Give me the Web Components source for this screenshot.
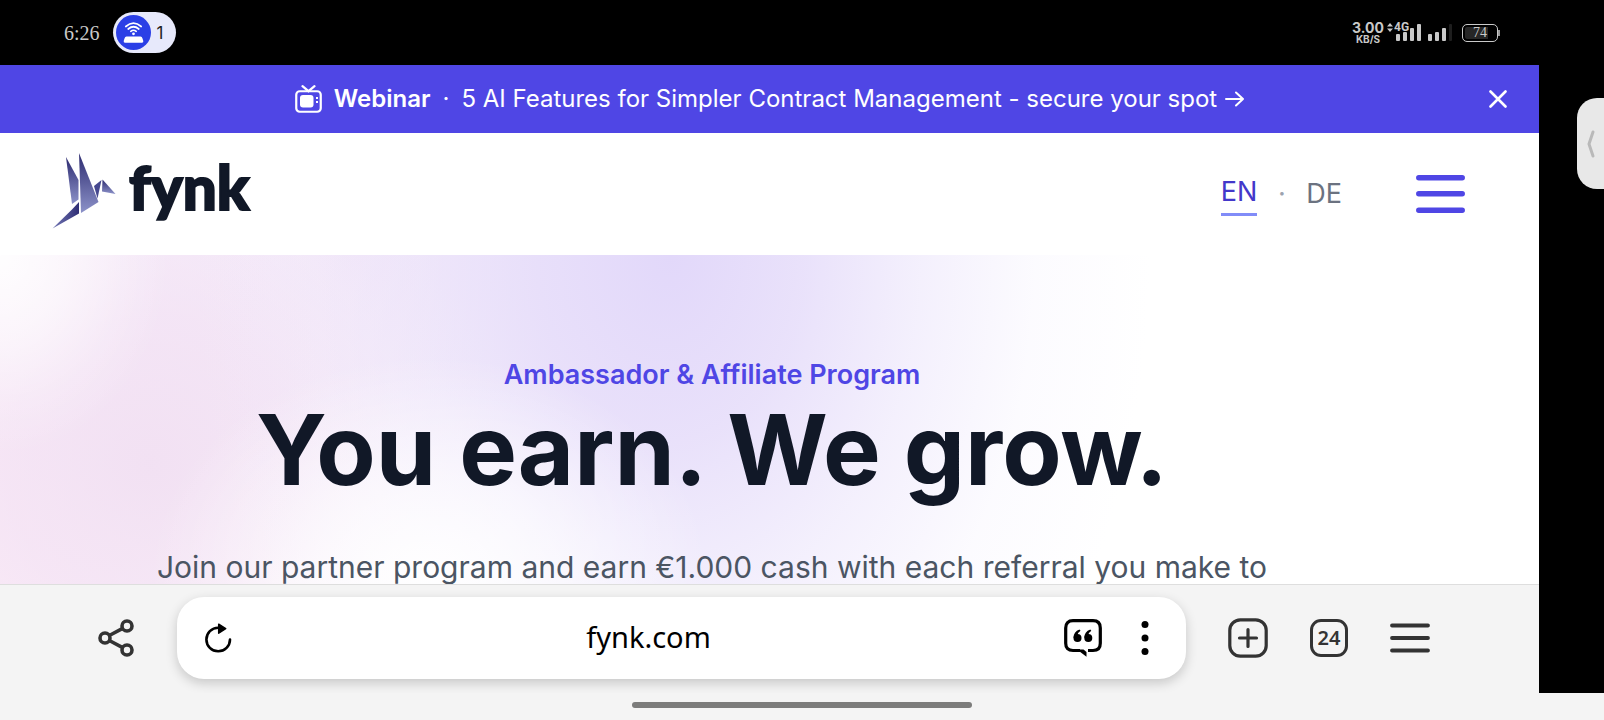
<!DOCTYPE html>
<html lang="en">
<head>
<meta charset="utf-8">
<meta name="viewport" content="width=device-width, initial-scale=1">
<title>fynk – Ambassador &amp; Affiliate Program</title>
<style>
  html, body { margin: 0; height: 100%; }
  body { font-family: Inter, "Liberation Sans", sans-serif; background: #f4f4f4; overflow: hidden; }
</style>
</head>
<body>
<phone-shell>
  <status-bar slot="status"></status-bar>
  <promo-banner>
    <span slot="label">Webinar</span>
    5 AI Features for Simpler Contract Management - secure your spot
  </promo-banner>
  <site-header></site-header>
  <hero-section>
    <span slot="eyebrow">Ambassador &amp; Affiliate Program</span>
    <span slot="title">You earn. We grow.</span>
    Join our partner program and earn €1.000 cash with each referral you make to
  </hero-section>
  <browser-toolbar></browser-toolbar>
  <edge-rail slot="rail"></edge-rail>
</phone-shell>

<script>
const define = (name, html) => {
  const template = document.createElement('template');
  template.innerHTML = html;
  customElements.define(name, class extends HTMLElement {
    constructor() {
      super();
      this.attachShadow({ mode: 'open' }).append(template.content.cloneNode(true));
    }
  });
};

const reset = `
  :host, *, *::before, *::after { box-sizing: border-box; }
  svg { display: block; flex: none; }
  button { display: flex; align-items: center; justify-content: center; padding: 0; border: 0; background: none; color: inherit; font: inherit; cursor: pointer; }
  a { color: inherit; text-decoration: none; }
`;

define('phone-shell', `
  <style>${reset}
    :host { display: flex; flex-direction: column; height: 100vh; }
    .body { display: flex; flex: 1; min-height: 0; }
    .screen { display: flex; flex-direction: column; flex: 1; min-width: 0; background: #fff; }
    .home { display: flex; justify-content: center; align-items: center; height: 27px; padding-bottom: 3px; background: #f4f4f4; }
    .home i { width: 340px; height: 6px; border-radius: 3px; background: #7c7c7b; }
  </style>
  <slot name="status"></slot>
  <div class="body">
    <main class="screen"><slot></slot></main>
    <slot name="rail"></slot>
  </div>
  <div class="home"><i></i></div>
`);

define('status-bar', `
  <style>${reset}
    :host { display: flex; align-items: center; justify-content: space-between; height: 65px; padding: 0 104px 0 64px; background: #000; color: #c9c9c9; }
    .left, .right { display: flex; align-items: center; }
    .left { gap: 13px; }
    .clock { font: 20px/24px "Liberation Serif", serif; }
    .pill { display: flex; align-items: center; gap: 6px; width: 63px; height: 41px; padding: 0 3px; border-radius: 21px; background: #e7e9fb; color: #222; font-size: 17px; line-height: 24px; }
    .right { gap: 7px; }
    .speed { display: flex; flex-direction: column; align-items: center; margin-right: 5px; font: 700 14px/12px Inter, sans-serif; }
    .speed small { font-size: 10px; line-height: 10px; }
    .cell { position: relative; display: flex; }
    .cell b { position: absolute; left: -2px; top: -4px; font: 700 12px/14px Roboto, sans-serif; }
    .cell .arrows { position: absolute; left: -9px; top: -1px; }
    .battery { display: flex; align-items: center; margin-left: 3px; }
    .battery span { display: flex; align-items: center; justify-content: center; width: 36px; height: 18px; border: 1px solid #c9c9c9; border-radius: 5px; box-shadow: inset 0 0 0 2px #000; background: linear-gradient(90deg, #262626 74%, #000 74%); font: 14px/16px "Liberation Serif", serif; }
    .battery::after { content: ""; width: 2px; height: 6px; background: #999; }
  </style>
  <div class="left">
    <span class="clock">6:26</span>
    <div class="pill">
      <svg width="35" height="35" viewBox="0 0 35 35"><circle cx="17.500" cy="17.500" r="17.500" fill="#2b3fe6"/><g fill="none" stroke="#fff" stroke-width="1.700" stroke-linecap="round"><path d="M9.800 11.500Q17.500 4.800 25.200 11.500M12.200 14Q17.500 9.500 22.800 14M14.800 16.300Q17.500 14.200 20.200 16.300"/></g><circle cx="17.500" cy="18.800" r="1.400" fill="#fff"/><path d="M10.500 21.500h14q1.500 0 2 2l.8 2.600q.3 1.700-1.300 1.700H9q-1.600 0-1.300-1.700l.8-2.600q.5-2 2-2z" fill="#fff"/></svg>
      <span>1</span>
    </div>
  </div>
  <div class="right">
    <div class="speed"><span>3.00</span><small>KB/S</small></div>
    <div class="cell">
      <svg class="arrows" width="6" height="9" viewBox="0 0 6 9" fill="#c9c9c9"><path d="M0 3.500L3 0l3 3.500zM0 5.500h6L3 9z"/></svg>
      <b>4G</b>
      <svg width="25" height="17" viewBox="0 0 25 17" fill="#c9c9c9"><rect y="10" width="4" height="7" rx="1"/><rect x="7" y="8" width="4" height="9" rx="1"/><rect x="14" y="4" width="4" height="13" rx="1"/><rect x="21" width="4" height="17" rx="1"/></svg>
    </div>
    <svg width="24" height="17" viewBox="0 0 24 17" fill="#c9c9c9"><rect y="10" width="4" height="7" rx="1"/><rect x="7" y="8" width="4" height="9" rx="1"/><rect x="14" y="4" width="4" height="13" rx="1"/><rect x="21" width="3" height="17" rx="1" fill="#1e1e1e"/></svg>
    <div class="battery"><span>74</span></div>
  </div>
`);

define('promo-banner', `
  <style>${reset}
    :host { display: grid; grid-template-columns: 1fr auto 1fr; align-items: center; flex: none; height: 68px; padding: 0 24px; background: #4f46e5; color: #fff; }
    a { grid-column: 2; display: flex; align-items: center; gap: 12px; font-size: 24px; line-height: 32px; white-space: nowrap; }
    strong { font-weight: 600; }
    .text { display: flex; align-items: center; gap: 8px; }
    button { justify-self: end; width: 34px; height: 34px; }
  </style>
  <a href="#webinar">
    <svg width="27" height="28" viewBox="0 0 27 28" fill="none" stroke="#fff" stroke-width="2.200"><rect x="1.250" y="6.250" width="24.500" height="20.500" rx="3.500"/><path d="M7.500 1.200l6 5 6-5" stroke-linecap="round"/><rect x="5" y="10" width="13.500" height="12.500" rx="3" fill="#fff" stroke="none"/><path d="M22 12v2M22 16v2" stroke-width="2"/></svg>
    <strong><slot name="label"></slot></strong>
    <span>·</span>
    <span class="text"><span><slot></slot></span>
      <svg width="19" height="16" viewBox="0 0 19 16" fill="none" stroke="#fff" stroke-width="2" stroke-linecap="round" stroke-linejoin="round"><path d="M1 8h17M11 1.500L18 8l-7 6.500"/></svg>
    </span>
  </a>
  <button aria-label="Dismiss"><svg width="18" height="18" viewBox="0 0 18 18" stroke="#fff" stroke-width="2.600" stroke-linecap="round"><path d="M1.500 1.500l15 15M16.500 1.500l-15 15"/></svg></button>
`);

define('site-header', `
  <style>${reset}
    :host { display: flex; align-items: center; justify-content: space-between; flex: none; height: 122px; padding: 0 74px 0 52px; background: #fff; }
    .logo { display: flex; align-items: flex-start; gap: 13px; padding-bottom: 6px; color: #111827; font: 900 60px/68px Lato, sans-serif; -webkit-text-stroke: 2px #111827; }
    nav { display: flex; align-items: center; font-size: 27px; line-height: 32px; color: #6b7280; }
    nav a[aria-current] { padding: 4px 0 5px; border-bottom: 3px solid #818cf8; color: #4338ca; }
    nav span { width: 49px; text-align: center; color: #9ca3af; }
    button { margin-left: 74px; color: #4f46e5; }
  </style>
  <a class="logo" href="#home">
    <svg width="64" height="76" viewBox="52 153 64 76" aria-hidden="true">
      <defs>
        <linearGradient id="g" x1="0" y1="0" x2="0" y2="1"><stop stop-color="#2d2b70"/><stop offset="1" stop-color="#8c92c9"/></linearGradient>
        <linearGradient id="h" x1="0" y1="0" x2="1" y2="0"><stop stop-color="#7377b5"/><stop offset="1" stop-color="#2f2e75"/></linearGradient>
      </defs>
      <path d="M66 157L78.500 180v19.500L72 204z" fill="url(#g)"/>
      <path d="M79 153L98.500 202 81 213z" fill="url(#g)"/>
      <path d="M94 186l7.500-6-4 18.500z" fill="#46488f"/>
      <path d="M102.500 179.500L115.500 194 102 191.500z" fill="url(#g)"/>
      <path d="M52.500 228.500L72 209.500l7-7.500v11.500z" fill="url(#h)"/>
    </svg>
    <span>fynk</span>
  </a>
  <nav>
    <a href="#en" aria-current="page">EN</a><span>·</span><a href="#de">DE</a>
    <button aria-label="Open menu"><svg width="49" height="38" viewBox="0 0 49 38" stroke="currentColor" stroke-width="5.500" stroke-linecap="round"><path d="M2.800 2.800h43.400M2.800 18.800h43.400M2.800 35.200h43.400"/></svg></button>
  </nav>
`);

define('hero-section', `
  <style>${reset}
    :host { display: block; flex: 1; min-height: 0; overflow: hidden; padding: 104px 115px 0 0; text-align: center;
      background:
        radial-gradient(ellipse 170px 200px at 0 0, #fffe 0%, #fff9 40%, #fff3 75%, #fff0 100%),
        radial-gradient(ellipse 280px 220px at 430px 320px, #fffffff0 0%, #ffffff90 45%, #fff0 100%),
        radial-gradient(ellipse 480px 680px at 670px 0, #e2d8faff 0%, #e6ddfadc 28%, #ebe4fb90 52%, #f1edfd38 76%, #f5f3ff00 100%),
        radial-gradient(ellipse 360px 360px at 150px 210px, #f1dff2e8 0%, #f3e2f4c0 40%, #f7eaf758 72%, #fbf3fb00 100%),
        radial-gradient(ellipse 460px 330px at 360px 0, #f1e5f8ff 0%, #f3e9f9c0 50%, #f8f2fb00 100%),
        linear-gradient(90deg, #fcecf7, #fff 300px); }
    .eyebrow { margin: 0; color: #4f46e5; font-weight: 600; font-size: 27px; line-height: 32px; }
    h1 { margin: 8px 0 0; color: #111827; font-weight: 700; font-size: 97px; line-height: 102px; white-space: nowrap; }
    .lead { margin: 48px 0 0; color: #4b5563; font-size: 30px; line-height: 36px; white-space: nowrap; }
  </style>
  <p class="eyebrow"><slot name="eyebrow"></slot></p>
  <h1><slot name="title"></slot></h1>
  <p class="lead"><slot></slot></p>
`);

define('browser-toolbar', `
  <style>${reset}
    :host { display: flex; flex: none; align-items: center; height: 109px; padding: 12px 100px 14px 87px; border-top: 1px solid #dedede; background: #f4f4f4; color: #333; }
    button { flex: none; width: 58px; height: 58px; }
    form { display: flex; align-items: center; flex: 1; min-width: 0; height: 82px; margin: 0 33px 0 32px; padding: 0 12px; border-radius: 27px; background: #fff; color: #000; box-shadow: 0 4px 12px #00000030; }
    .quote { width: 66px; }
    input { flex: 1; min-width: 0; border: 0; outline: 0; padding: 0 0 2px; background: none; color: #000; text-align: center; font: 29px/36px "Noto Sans", sans-serif; }
    .tabs { display: flex; gap: 23px; }
    .count b { display: flex; align-items: center; justify-content: center; width: 38px; height: 38px; border: 3px solid #333; border-radius: 11px; font: 600 20px/24px "Noto Sans", sans-serif; }
  </style>
  <button aria-label="Share"><svg width="36" height="38" viewBox="0 0 36 38" fill="none" stroke="currentColor" stroke-width="3.600"><circle cx="7" cy="19" r="5"/><circle cx="29" cy="7" r="5"/><circle cx="29" cy="31" r="5"/><path d="M11.300 16.500l13.400-7.200M11.300 21.500l13.400 7.200"/></svg></button>
  <form>
    <button type="button" aria-label="Reload"><svg width="28" height="30" viewBox="0 0 28 30" fill="none" stroke="#000" stroke-width="2.600" stroke-linecap="round"><path d="M26 16.500A11.800 11.800 0 1 1 14.200 4.700"/><path d="M14.700 1.200v9l7-4.500z" fill="#000" stroke-width="1.500" stroke-linejoin="round"/></svg></button>
    <input type="text" value="fynk.com" aria-label="Address">
    <button class="quote" type="button" aria-label="Quotes"><svg width="38" height="38" viewBox="0 0 38 38"><path d="M16 31.500H9q-7.300 0-7.300-7.300V9Q1.700 1.700 9 1.700h20q7.300 0 7.300 7.300v15.200q0 7.300-7.300 7.300h-5" fill="none" stroke="#000" stroke-width="3.200"/><path d="M13 30.500l9.500 7.300V33l-3-2.500z"/><circle cx="13.500" cy="19" r="4"/><path d="M9.500 19q0-6.500 6-8.500l1 1.300q-2.800 2-3 4.200z"/><circle cx="24.300" cy="19" r="4"/><path d="M20.300 19q0-6.500 6-8.500l1 1.300q-2.800 2-3 4.200z"/></svg></button>
    <button type="button" aria-label="More"><svg width="8" height="36" viewBox="0 0 8 36"><circle cx="4" cy="4.500" r="3.500"/><circle cx="4" cy="18" r="3.500"/><circle cx="4" cy="31.500" r="3.500"/></svg></button>
  </form>
  <div class="tabs">
    <button aria-label="New tab"><svg width="40" height="40" viewBox="0 0 40 40" fill="none" stroke="currentColor" stroke-width="3.200"><rect x="1.800" y="1.800" width="36.400" height="36.400" rx="10.500"/><path d="M20 11.500v17M11.500 20h17" stroke-linecap="round"/></svg></button>
    <button class="count" aria-label="Open tabs"><b>24</b></button>
    <button aria-label="Menu"><svg width="40" height="30" viewBox="0 0 40 30" stroke="currentColor" stroke-width="3.800" stroke-linecap="round"><path d="M2 2.500h36M2 15h36M2 27.500h36"/></svg></button>
  </div>
`);

define('edge-rail', `
  <style>${reset}
    :host { display: flex; flex-direction: column; align-items: flex-end; flex: none; width: 65px; padding-top: 33px; background: #000; }
    button { width: 27px; height: 91px; border-radius: 20px 0 0 20px; background: #e8e8e8; }
  </style>
  <button aria-label="Open side panel"><svg width="8" height="28" viewBox="0 0 8 28" fill="none" stroke="#b9b9b9" stroke-width="3" stroke-linecap="round" stroke-linejoin="round"><path d="M6 2L2 14l4 12"/></svg></button>
`);
</script>
</body>
</html>
